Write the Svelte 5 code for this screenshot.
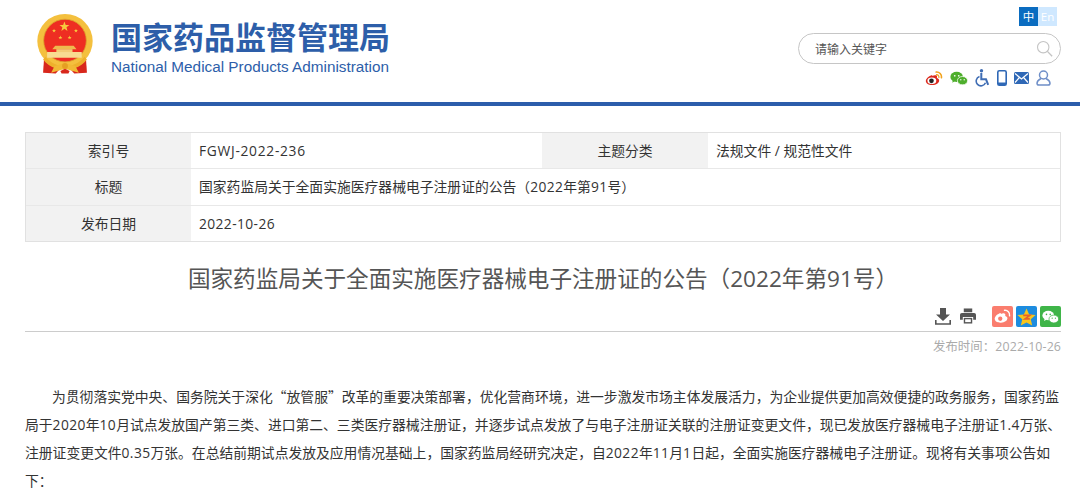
<script>
  const stars = [
    [49, 22, 9],
    [31, 29, 3.6],
    [69, 29, 3.6],
    [42, 41, 3.6],
    [58, 41, 3.6]
  ];
  function star(cx, cy, r) {
    let p = [];
    for (let i = 0; i < 10; i++) {
      const a = -Math.PI / 2 + (i * Math.PI) / 5;
      const q = i % 2 ? r * 0.42 : r;
      p.push((cx + q * Math.cos(a)).toFixed(2) + ',' + (cy + q * Math.sin(a)).toFixed(2));
    }
    return p.join(' ');
  }
</script>

<div class="page" lang="zh-CN">
  <header class="head">
    <div class="brand">
      <svg class="emblem" viewBox="0 0 100 104" aria-hidden="true">
        <path d="M14 72 L12 102 L34 103 L44 92 Z" fill="#d8271c" />
        <path d="M86 72 L88 102 L66 103 L56 92 Z" fill="#d8271c" />
        <ellipse cx="50" cy="47" rx="48" ry="47" fill="#f4c03e" />
        <circle cx="50" cy="46" r="37" fill="#ee2e22" stroke="#dca32c" stroke-width="1.5" />
        {#each stars as s}
          <polygon points={star(s[0], s[1], s[2])} fill="#f7c93e" />
        {/each}
        <path d="M19 66 H79 V76 H19 Z" fill="#f8dc92" />
        <path d="M33 55 H65 L70 61 H28 Z" fill="#eeb94e" />
        <path d="M35 61 H63 V66 H35 Z" fill="#f3cd76" />
        <path d="M16 74 C26 86 38 90 50 90 C62 90 74 86 84 74 L88 79 C76 94 62 96 50 96 C38 96 24 94 12 79 Z" fill="#eeb02c" />
        <path d="M32 90 L26 102 L50 95 L74 102 L68 90 L50 85 Z" fill="#f2b935" />
        <circle cx="50" cy="90" r="5" fill="#e59f22" />
        <path d="M42 99 L50 95 L58 99 L56 103 H44 Z" fill="#d8271c" />
      </svg>
      <div class="names">
        <div class="cn">国家药品监督管理局</div>
        <div class="en">National Medical Products Administration</div>
      </div>
    </div>
    <div class="tools">
      <div class="lang">
        <span class="zh">中</span><span class="eng">En</span>
      </div>
      <div class="search">
        <span class="ph">请输入关键字</span>
        <svg class="mag" viewBox="0 0 20 20" aria-hidden="true">
          <circle cx="8.5" cy="8.5" r="6.7" fill="none" stroke="#c4c4c4" stroke-width="1.3" />
          <path d="M13.4 13.4 L19 19" stroke="#c4c4c4" stroke-width="1.6" />
        </svg>
      </div>
      <div class="quick">
        <svg width="18" height="15" viewBox="0 0 19 16" aria-hidden="true">
          <path d="M7.6 4.2C3.9 5 .6 8.2.8 10.9c.2 2.6 3.4 4.3 7 4.1 4-.2 7.2-2.4 7.2-5 0-1.6-1.6-2.2-2.5-2.5.5-1.3.3-2.6-1-2.9-1.1-.3-2.7.1-3.9.6z" fill="#dc2a1e" />
          <ellipse cx="7.2" cy="10.3" rx="4.7" ry="3.5" fill="#fff" />
          <circle cx="6.8" cy="10.5" r="2.5" fill="#222" />
          <path d="M11.8 1.1c3.3-.4 6.2 2.4 5.6 6.1" fill="none" stroke="#f2a31d" stroke-width="1.7" stroke-linecap="round" />
          <path d="M12.2 4c1.5-.2 2.8 1 2.5 2.7" fill="none" stroke="#f2a31d" stroke-width="1.4" stroke-linecap="round" />
        </svg>
        <svg width="18" height="15" viewBox="0 0 19 15" aria-hidden="true">
          <ellipse cx="7" cy="5.8" rx="6.6" ry="5.3" fill="#4eae2c" />
          <path d="M3 9l-.6 3 3-1.8z" fill="#4eae2c" />
          <ellipse cx="13.2" cy="9.8" rx="5.4" ry="4.4" fill="#4eae2c" stroke="#fff" stroke-width=".8" />
          <circle cx="5" cy="4.6" r=".9" fill="#fff" />
          <circle cx="9.2" cy="4.6" r=".9" fill="#fff" />
          <circle cx="11.4" cy="8.8" r=".7" fill="#fff" />
          <circle cx="15" cy="8.8" r=".7" fill="#fff" />
        </svg>
        <svg width="15" height="18" viewBox="0 0 15 18" aria-hidden="true">
          <circle cx="6.5" cy="1.8" r="1.7" fill="#3f6db4" />
          <path d="M6.3 4V10.3H11L13.2 15.8" fill="none" stroke="#3f6db4" stroke-width="2" />
          <path d="M4.5 7.5A4.8 4.8 0 1 0 10.5 13.8" fill="none" stroke="#3f6db4" stroke-width="1.6" />
        </svg>
        <svg width="10" height="16" viewBox="0 0 10 16" aria-hidden="true">
          <rect x=".8" y=".8" width="8.4" height="14.4" rx="1.5" fill="none" stroke="#2f68b6" stroke-width="1.6" />
          <path d="M1 12.5H9V15H1z" fill="#2f68b6" />
        </svg>
        <svg width="15" height="12" viewBox="0 0 15 12" aria-hidden="true">
          <rect width="15" height="12" rx="1.5" fill="#2f68b6" />
          <path d="M1 1.5L7.5 7 14 1.5M1 10.5L5.4 5.5M14 10.5L9.6 5.5" fill="none" stroke="#fff" stroke-width="1.2" />
        </svg>
        <svg width="15" height="16" viewBox="0 0 15 16" aria-hidden="true">
          <circle cx="7.5" cy="5" r="4" fill="none" stroke="#6f8fc8" stroke-width="1.5" />
          <path d="M5 8.5C2.5 9.8 1 11.5 1 13.2 1 14.4 2 15 3 15H12C13 15 14 14.4 14 13.2 14 11.5 12.5 9.8 10 8.5" fill="none" stroke="#6f8fc8" stroke-width="1.5" />
        </svg>
      </div>
    </div>
  </header>

  <div class="bar"></div>

  <main class="content">
    <div class="table">
      <div class="row">
        <div class="label">索引号</div>
        <div class="value half"><span class="code">FGWJ-2022-236</span></div>
        <div class="label">主题分类</div>
        <div class="value">法规文件 / 规范性文件</div>
      </div>
      <div class="row">
        <div class="label">标题</div>
        <div class="value">国家药监局关于全面实施医疗器械电子注册证的公告（<span class="num">2022</span>年第<span class="num">91</span>号）</div>
      </div>
      <div class="row">
        <div class="label">发布日期</div>
        <div class="value"><span class="num">2022-10-26</span></div>
      </div>
    </div>

    <h1>国家药监局关于全面实施医疗器械电子注册证的公告（2022年第91号）</h1>

    <div class="actions">
      <svg class="dl" width="16" height="17" viewBox="0 0 16 17" aria-hidden="true">
        <path d="M5 0H11V6.5H15L8 13 1 6.5H5Z" fill="#555" />
        <path d="M.8 12V16H15.2V12" fill="none" stroke="#555" stroke-width="1.6" />
      </svg>
      <svg class="print" width="16" height="16" viewBox="0 0 17 16" aria-hidden="true">
        <path d="M4 0H13V4H4Z" fill="#555" />
        <path d="M2 4.8H15A2 2 0 0 1 17 6.8V12H14V9H3V12H0V6.8A2 2 0 0 1 2 4.8Z" fill="#555" />
        <path d="M4 10H13V16H4Z" fill="#555" />
        <path d="M5.5 11.5H11.5V14.5H5.5Z" fill="#fff" />
      </svg>
      <span class="share weibo">
        <svg width="17" height="15" viewBox="0 0 19 16" aria-hidden="true">
          <path d="M7.6 4.2C3.9 5 .6 8.2.8 10.9c.2 2.6 3.4 4.3 7 4.1 4-.2 7.2-2.4 7.2-5 0-1.6-1.6-2.2-2.5-2.5.5-1.3.3-2.6-1-2.9-1.1-.3-2.7.1-3.9.6z" fill="#fff" />
          <circle cx="7" cy="10.5" r="2.4" fill="#fa7d6e" />
          <path d="M11.8 1.1c3.3-.4 6.2 2.4 5.6 6.1" fill="none" stroke="#fff" stroke-width="1.6" stroke-linecap="round" />
        </svg>
      </span>
      <span class="share qzone">
        <svg width="19" height="18" viewBox="0 0 20 19" aria-hidden="true">
          <polygon points="10,0.5 12.8,6.8 19.6,7.5 14.5,12 16,18.6 10,15.2 4,18.6 5.5,12 0.4,7.5 7.2,6.8" fill="#f8c51c" />
          <path d="M6.5 7.8H13.5L8.5 11.5H13.5" fill="none" stroke="#e8612c" stroke-width="1.8" />
        </svg>
      </span>
      <span class="share wechat">
        <svg width="17" height="14" viewBox="0 0 19 15" aria-hidden="true">
          <ellipse cx="7" cy="5.8" rx="6.6" ry="5.3" fill="#fff" />
          <path d="M3 9l-.6 3 3-1.8z" fill="#fff" />
          <ellipse cx="13.2" cy="9.8" rx="5.4" ry="4.4" fill="#fff" stroke="#3fb549" stroke-width=".8" />
          <circle cx="5" cy="4.6" r=".9" fill="#3fb549" />
          <circle cx="9.2" cy="4.6" r=".9" fill="#3fb549" />
          <circle cx="11.4" cy="8.8" r=".7" fill="#3fb549" />
          <circle cx="15" cy="8.8" r=".7" fill="#3fb549" />
        </svg>
      </span>
    </div>
    <div class="date">发布时间：2022-10-26</div>

    <p class="body"><span class="first">为贯彻落实党中央、国务院关于深化<span class="q">“</span>放管服<span class="q">”</span>改革的重要决策部署，优化营商环境，进一步激发市场主体发展活力，为企业提供更加高效便捷的政务服务，国家药监</span><br />局于<span class="num">2020</span>年<span class="num">10</span>月试点发放国产第三类、进口第二、三类医疗器械注册证，并逐步试点发放了与电子注册证关联的注册证变更文件，现已发放医疗器械电子注册证<span class="num">1.4</span>万张、<br />注册证变更文件<span class="num">0.35</span>万张。在总结前期试点发放及应用情况基础上，国家药监局经研究决定，自<span class="num">2022</span>年<span class="num">11</span>月<span class="num">1</span>日起，全面实施医疗器械电子注册证。现将有关事项公告如<br />下：</p>
  </main>
</div>

<style>
  :global(body) {
    margin: 0;
    background: #fff;
  }
  .page {
    width: 1080px;
    height: 494px;
    overflow: hidden;
    font-family: "Open Sans", "Noto Sans CJK SC", sans-serif;
    font-size: 13.8px;
    color: #333;
  }
  .num {
    letter-spacing: 0.4px;
  }
  .code {
    letter-spacing: 0.7px;
  }
  .head {
    height: 102px;
    box-sizing: border-box;
    padding: 0 19px 0 36px;
    display: flex;
    justify-content: space-between;
  }
  .brand {
    display: flex;
    align-items: flex-start;
    padding-top: 14px;
  }
  .emblem {
    width: 58px;
    height: 60px;
    display: block;
  }
  .names {
    margin-left: 17px;
    padding-top: 3px;
  }
  .cn {
    font-family: "Noto Sans CJK SC", sans-serif;
    font-size: 31px;
    font-weight: 700;
    line-height: 38px;
    color: #2d5ea9;
    white-space: nowrap;
  }
  .en {
    font-family: "Liberation Sans", sans-serif;
    font-size: 15.3px;
    line-height: 20px;
    margin-top: 2px;
    color: #2d5ea9;
    white-space: nowrap;
  }
  .tools {
    display: flex;
    flex-direction: column;
    align-items: flex-end;
    padding-top: 7px;
  }
  .lang {
    display: flex;
    margin-right: 4px;
    font-size: 11.5px;
    line-height: 19px;
    text-align: center;
    color: #fff;
  }
  .lang span {
    width: 19px;
    height: 19px;
  }
  .zh {
    background: #0a6cc0;
  }
  .eng {
    background: #cfe8ff;
  }
  .search {
    width: 263px;
    height: 31px;
    margin-top: 7px;
    box-sizing: border-box;
    border: 1px solid #c6c6c6;
    border-radius: 16px;
    display: flex;
    align-items: center;
    justify-content: space-between;
    padding: 0 7px 0 16px;
  }
  .ph {
    font-size: 12px;
    color: #555;
  }
  .mag {
    width: 17px;
    height: 17px;
  }
  .quick {
    display: flex;
    align-items: center;
    gap: 7px;
    margin-top: 4px;
    margin-right: 10px;
    height: 20px;
  }
  .bar {
    height: 4px;
    background: #2c5dab;
  }
  .content {
    padding: 26px 19px 0 25px;
  }
  .table {
    border: 1px solid #e1e1e1;
  }
  .row {
    display: flex;
    height: 36px;
    box-sizing: border-box;
    border-bottom: 1px solid #e8e8e8;
  }
  .row:nth-child(2) {
    height: 37px;
  }
  .row:last-child {
    height: 35px;
    border-bottom: none;
  }
  .label {
    width: 165px;
    flex: none;
    background: #f2f2f2;
    text-align: center;
    line-height: 36px;
  }
  .value {
    flex: 1;
    padding-left: 8px;
    line-height: 36px;
  }
  .value.half {
    flex: none;
    width: 351px;
    box-sizing: border-box;
  }
  .half + .label {
    width: 166px;
  }
  h1 {
    margin: 21px 0 0;
    font-size: 22.6px;
    font-weight: 400;
    line-height: 32px;
    text-align: center;
    color: #555;
    white-space: nowrap;
  }
  .actions {
    margin-top: 8px;
    height: 29px;
    box-sizing: border-box;
    border-bottom: 1px solid #ccc;
    display: flex;
    justify-content: flex-end;
    align-items: flex-start;
    padding-top: 3px;
  }
  .actions svg {
    display: block;
  }
  .dl,
  .print {
    margin-top: 2px;
  }
  .print {
    margin-left: 9px;
    margin-right: 13px;
  }
  .share {
    width: 21px;
    height: 21px;
    margin-left: 3px;
    border-radius: 2px;
    display: flex;
    align-items: center;
    justify-content: center;
  }
  .weibo {
    background: #fa7d6e;
  }
  .qzone {
    background: #1d8cdf;
  }
  .wechat {
    background: #3fb549;
  }
  .date {
    margin-top: 6px;
    font-size: 12.4px;
    line-height: 18px;
    text-align: right;
    letter-spacing: 0.1px;
    color: #aaa;
  }
  .body {
    margin: 26px 0 0;
    line-height: 28px;
    color: #333;
    white-space: nowrap;
  }
  .first {
    margin-left: 27px;
  }
  .q {
    font-family: "Noto Sans CJK SC", sans-serif;
  }
</style>
